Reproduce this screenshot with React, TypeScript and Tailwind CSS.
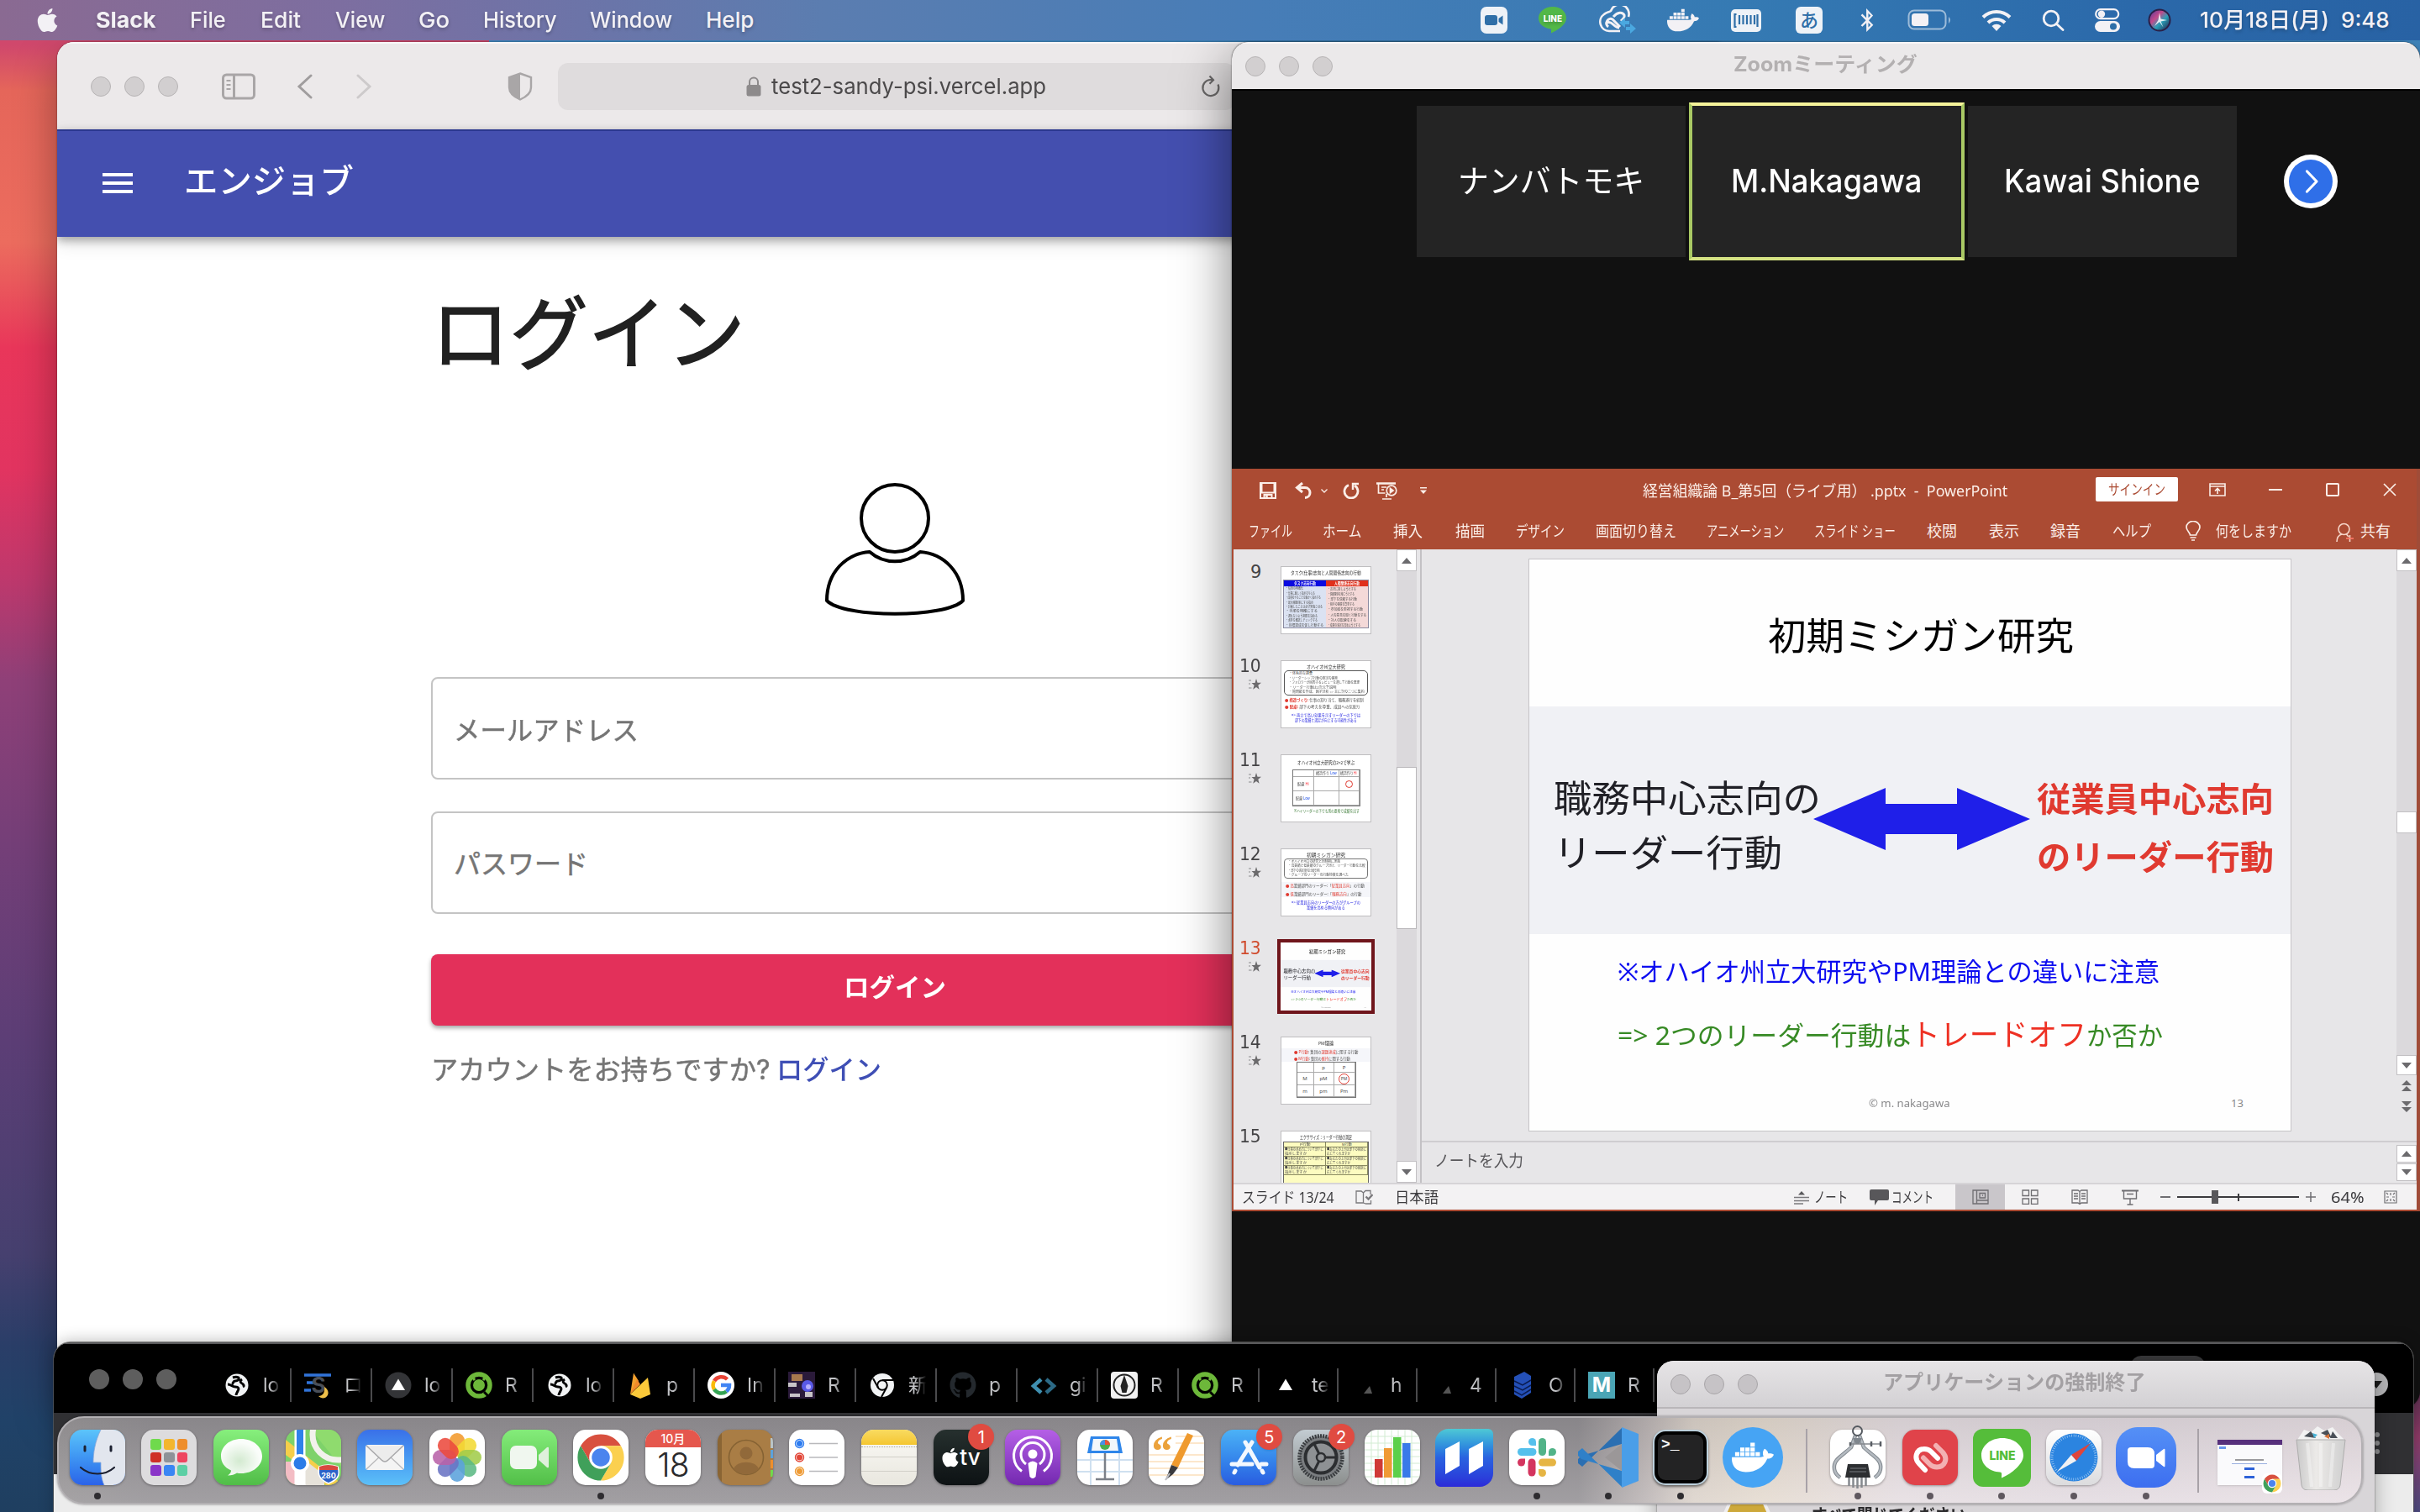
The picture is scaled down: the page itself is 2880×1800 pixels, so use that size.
import React, { useLayoutEffect, useRef, useState } from "react";
import { FaApple, FaBluetoothB, FaDocker, FaGithub } from "react-icons/fa";

/* Text squeezed or stretched horizontally so that it fills its box exactly. */
function Fit({ className = "", children }: { className?: string; children: React.ReactNode }) {
  const box = useRef<HTMLSpanElement>(null);
  const inner = useRef<HTMLSpanElement>(null);
  const [k, setK] = useState(1);
  useLayoutEffect(() => {
    if (box.current && inner.current && inner.current.offsetWidth) {
      setK(box.current.offsetWidth / inner.current.offsetWidth);
    }
  }, []);
  return (
    <span ref={box} className={"block shrink-0 leading-none " + className}>
      <span ref={inner} className="inline-block origin-left whitespace-pre" style={{ transform: `scaleX(${k})` }}>
        {children}
      </span>
    </span>
  );
}

function Lights({ className, dot }: { className: string; dot: string }) {
  return (
    <div className={"flex shrink-0 gap-4 " + className}>
      {[0, 1, 2].map((i) => (
        <span key={i} className={"block h-6 w-6 rounded-full " + dot} />
      ))}
    </div>
  );
}

const greyDot = "bg-[#d2cfd0] border border-[#b7b4b5]";

/* ───────────── menu bar ───────────── */

function MenuBar() {
  return (
    <div className="absolute inset-x-0 top-0 flex h-12 items-center bg-[linear-gradient(90deg,#8a6a92_0%,#7d6ea0_14%,#6c74a8_24%,#5b7db0_34%,#477db7_52%,#357ab3_72%,#2b69aa_88%,#2862a4_100%)] text-[26px] font-medium text-[#f3f1f5] [text-shadow:0_2px_4px_rgba(0,0,0,0.25)]">
      <FaApple className="ml-[42px] h-[32px] w-[29px]" />
      <Fit className="ml-[43px] w-[72px] font-bold">Slack</Fit>
      <Fit className="ml-[40px] w-[43px]">File</Fit>
      <Fit className="ml-[41px] w-[48px]">Edit</Fit>
      <Fit className="ml-[41px] w-[59px]">View</Fit>
      <Fit className="ml-[40px] w-[37px]">Go</Fit>
      <Fit className="ml-[40px] w-[88px]">History</Fit>
      <Fit className="ml-[39px] w-[98px]">Window</Fit>
      <Fit className="ml-[40px] w-[57px]">Help</Fit>
      <div className="ml-auto flex h-full items-center">
        <svg className="h-8 w-8" viewBox="0 0 32 32">
          <rect width="32" height="32" rx="7" fill="#eef2f7" />
          <rect x="5" y="10" width="15" height="12" rx="3" fill="#2f6fa8" />
          <path d="M21.5 14l5-3.5v11l-5-3.500z" fill="#2f6fa8" />
        </svg>
        <svg className="ml-[36px] h-[34px] w-[36px]" viewBox="0 0 36 34">
          <path d="M18 1C8.500 1 1 7 1 14.500c0 7 6 12 15 13v5c6-3 18-9 18-18C34 7 27.500 1 18 1z" fill="#52b848" />
          <text x="18" y="18.500" fontSize="10" fontWeight="800" fontFamily="Inter" fill="#fff" textAnchor="middle">LINE</text>
        </svg>
        <svg className="ml-[36px] h-[34px] w-[46px]" viewBox="0 0 46 34" fill="none">
          <path d="M26 30H13a11 11 0 0 1-6-20C10 7 12 8 15 6a11 11 0 0 1 21 7" stroke="#f3f1f5" strokeWidth="2.600" />
          <path d="M25 26c-6 0-9-9-14-6M18 13c5-6 11-6 13-2 1 3-2 5-4 7M12 25c-5-4 0-12 5-9l9 9" stroke="#f3f1f5" strokeWidth="3" />
          <path d="M25 20l7-6v4h5v4h-5v4zM45 27l-7 6v-4h-5v-4h5v-4z" fill="#4aa8e0" />
        </svg>
        <FaDocker className="ml-[36px] h-[34px] w-[38px]" />
        <svg className="ml-[38px] h-[27px] w-[36px]" viewBox="0 0 36 27">
          <rect width="36" height="27" rx="5" fill="#eef2f7" />
          <path d="M6.500 6h-2v15h2M10 7v11M14.500 7v11M19 7v11M23.500 7v11M28 7v11M31.500 6v15" stroke="#2f6fa8" strokeWidth="2.200" fill="none" />
        </svg>
        <span className="ml-[41px] flex h-8 w-8 items-center justify-center rounded-[6px] bg-[#eef2f7] text-[22px] leading-none text-[#2f6fa8] [text-shadow:none]">あ</span>
        <FaBluetoothB className="ml-[42px] h-[28px] w-[22px]" />
        <svg className="ml-[37px] h-[26px] w-[54px]" viewBox="0 0 54 26">
          <rect x="1.500" y="1.500" width="44" height="22" rx="6.500" fill="none" stroke="#9dbcd9" strokeWidth="2" />
          <rect x="5" y="5" width="20" height="15" rx="3.500" fill="#f3f1f5" />
          <path d="M49 9q4 3.500 0 8z" fill="#9dbcd9" />
        </svg>
        <svg className="ml-[34px] h-[26px] w-[36px]" viewBox="0 0 36 26" fill="none" stroke="#f3f1f5" strokeWidth="4">
          <path d="M2 9.500a23 23 0 0 1 32 0M8 16a14.500 14.500 0 0 1 20 0" />
          <path d="M18 26l-5.500-6a8 8 0 0 1 11 0z" fill="#f3f1f5" stroke="none" />
        </svg>
        <svg className="ml-[36px] h-[26px] w-[27px]" viewBox="0 0 27 26" fill="none" stroke="#f3f1f5" strokeWidth="2.800">
          <circle cx="11" cy="11" r="8.800" />
          <path d="M17.500 17.500l7.500 7" strokeLinecap="round" />
        </svg>
        <svg className="ml-[36px] h-[28px] w-[30px]" viewBox="0 0 30 28">
          <rect x="1.200" y="1.200" width="27" height="11" rx="5.500" fill="none" stroke="#f3f1f5" strokeWidth="2.200" />
          <circle cx="8" cy="6.700" r="4.200" fill="#f3f1f5" />
          <rect y="15" width="30" height="13" rx="6.500" fill="#f3f1f5" />
          <circle cx="22" cy="21.500" r="4" fill="#2f6fa8" />
        </svg>
        <svg className="ml-[33px] h-[28px] w-[28px]" viewBox="0 0 28 28">
          <defs>
            <linearGradient id="siri" x1="0" y1="0" x2="1" y2="1">
              <stop offset="0" stopColor="#5a3a9a" />
              <stop offset=".35" stopColor="#c24a8a" />
              <stop offset=".6" stopColor="#2aa0b8" />
              <stop offset="1" stopColor="#20204a" />
            </linearGradient>
          </defs>
          <circle cx="14" cy="14" r="13.500" fill="#2a2048" />
          <circle cx="14" cy="14" r="11.500" fill="url(#siri)" />
          <path d="M14 5l1.500 7.500L23 14l-7.500 1.500 3 7L14 16l-6 5 4.500-7z" fill="#fff" opacity=".85" />
        </svg>
        <Fit className="ml-[34px] w-[154px]">10月18日(月)</Fit>
        <Fit className="ml-[14px] mr-[36px] w-[58px]">9:48</Fit>
      </div>
    </div>
  );
}

/* ───────────── Safari with the login page ───────────── */

function SafariWindow() {
  return (
    <div className="absolute left-[68px] top-[50px] flex h-[1620px] w-[1994px] flex-col overflow-hidden rounded-t-[20px] bg-white shadow-[0_0_2px_rgba(0,0,0,0.5),0_20px_50px_rgba(0,0,0,0.35)]">
      <div className="flex h-[104px] shrink-0 items-center border-t-2 border-[#f8f6f7] bg-[#ece9ea]">
        <Lights className="ml-[40px]" dot={greyDot} />
        <svg className="ml-[52px] h-[32px] w-[40px]" viewBox="0 0 40 32" fill="none" stroke="#a9a6a7" strokeWidth="3">
          <rect x="1.500" y="2" width="37" height="28" rx="4" />
          <path d="M14.500 2v28" />
          <path d="M5.500 9h5M5.500 14h5M5.500 19h5" strokeWidth="2" />
        </svg>
        <svg className="ml-[49px] h-[30px] w-[20px]" viewBox="0 0 20 30" fill="none" stroke="#a09d9e" strokeWidth="3" strokeLinecap="round">
          <path d="M17 2L3 15l14 13" />
        </svg>
        <svg className="ml-[50px] h-[30px] w-[20px]" viewBox="0 0 20 30" fill="none" stroke="#cdcacb" strokeWidth="3" strokeLinecap="round">
          <path d="M3 2l14 13L3 28" />
        </svg>
        <svg className="ml-[161px] h-[34px] w-[30px]" viewBox="0 0 30 34">
          <path d="M15 1.500L28 6v12c0 7-5 11-13 14.500C7 29 2 25 2 18V6z" fill="none" stroke="#a9a6a7" strokeWidth="2.400" />
          <path d="M15 1.500V32.500C7 29 2 25 2 18V6z" fill="#a9a6a7" />
        </svg>
        <div className="ml-[30px] flex h-[56px] w-[806px] items-center rounded-[12px] bg-[#dfdcdd] text-[26px] text-[#4b494a]">
          <svg className="ml-[224px] h-[24px] w-[18px]" viewBox="0 0 18 24">
            <rect x="0.500" y="10" width="17" height="13.500" rx="2.500" fill="#8d8a8b" />
            <path d="M4 11V6.500a5 5 0 0 1 10 0V11" fill="none" stroke="#8d8a8b" strokeWidth="2" />
          </svg>
          <Fit className="ml-[12px] w-[327px]">test2-sandy-psi.vercel.app</Fit>
          <svg className="ml-[184px] h-[28px] w-[24px]" viewBox="0 0 24 28" fill="none" stroke="#6a6868" strokeWidth="2.200">
            <path d="M20.500 11.500a9.500 9.500 0 1 1-9-5.500h3" />
            <path d="M10.500 1.500l4.500 4.700-4.500 4.500" />
          </svg>
        </div>
      </div>
      <div className="relative flex h-[128px] shrink-0 items-center border-t-2 border-[#2b388f] bg-[#444faf] text-white shadow-[0_4px_10px_rgba(0,0,0,0.3),0_8px_20px_rgba(0,0,0,0.12)]">
        <div className="ml-[54px] mt-[-2px] flex w-9 flex-col gap-[6px]">
          <span className="h-1 bg-white" />
          <span className="h-1 bg-white" />
          <span className="h-1 bg-white" />
        </div>
        <Fit className="ml-[61px] mt-[-6px] w-[202px] text-[40px] font-medium">エンジョブ</Fit>
      </div>
      <div className="ml-[445px] flex w-[1104px] flex-col">
        <Fit className="mt-[67px] w-[374px] text-[96px] font-normal text-[#212121] [-webkit-text-stroke:1.5px_#212121]">ログイン</Fit>
        <svg className="ml-[468px] mt-[128px] h-[160px] w-[168px]" viewBox="0 0 168 160" fill="none" stroke="#000" strokeWidth="4" strokeLinejoin="round">
          <circle cx="84" cy="44" r="40" />
          <path d="M54 84C26 86 3 108 3 142c20 21 142 21 162 0 0-34-23-56-51-58-17 15-43 15-60 0z" />
        </svg>
        <div className="mt-[73px] flex h-[122px] items-center rounded-[8px] border-2 border-[#c4c4c4] pl-[25px] pt-[6px] [-webkit-text-stroke:0.500px_#757575]">
          <Fit className="w-[220px] text-[32px] text-[#757575]">メールアドレス</Fit>
        </div>
        <div className="mt-[38px] flex h-[122px] items-center rounded-[8px] border-2 border-[#c4c4c4] pl-[25px] pt-[4px] [-webkit-text-stroke:0.500px_#757575]">
          <Fit className="w-[160px] text-[32px] text-[#757575]">パスワード</Fit>
        </div>
        <div className="mt-[48px] flex h-[85px] items-center justify-center rounded-[8px] bg-[#e3305a] pb-[7px] shadow-[0_3px_5px_rgba(0,0,0,0.35)]">
          <Fit className="w-[122px] text-[30px] font-bold text-white">ログイン</Fit>
        </div>
        <div className="mt-[37px] flex items-center text-[32px]">
          <Fit className="w-[403px] text-[#757575] [-webkit-text-stroke:0.500px_#757575]">アカウントをお持ちですか?</Fit>
          <Fit className="ml-[8px] w-[125px] font-medium text-[#3f4fb5]">ログイン</Fit>
        </div>
      </div>
    </div>
  );
}

/* ───────────── PowerPoint share ───────────── */

function Slide() {
  return (
    <div className="flex h-[680px] w-[906px] shrink-0 flex-col bg-[#fefefe] font-['Noto_Sans','Noto_Sans_CJK_JP',sans-serif]">
      <div className="flex h-[175px] items-center justify-center pl-[25px] pt-[6px]">
        <Fit className="w-[364px] text-[45px] text-black">初期ミシガン研究</Fit>
      </div>
      <div className="flex h-[271px] bg-[#f0f1f5]">
        <div className="ml-[29px] mt-[87px] w-[315px] text-[44px] text-[#202026]">
          <Fit className="w-[318px]">職務中心志向の</Fit>
          <Fit className="mt-[21px] w-[272px]">リーダー行動</Fit>
        </div>
        <svg className="ml-[-6px] mt-[97px] h-[74px] w-[258px]" viewBox="0 0 258 74">
          <path d="M0 37L86 0v19h85V0l87 37-87 37V55H86v19z" fill="#1f1fe9" />
        </svg>
        <div className="ml-[8px] mt-[90px] text-[40px] font-bold text-[#e03a30]">
          <Fit className="w-[282px]">従業員中心志向</Fit>
          <Fit className="mt-[29px] w-[282px]">のリーダー行動</Fit>
        </div>
      </div>
      <div className="flex flex-1 flex-col pl-[105px] text-[31px]">
        <Fit className="mt-[29px] w-[645px] text-[#0d0df0]">※オハイオ州立大研究やPM理論との違いに注意</Fit>
        <div className="mt-[42px] flex items-end text-[#378a25]">
          <Fit className="mb-[2px] w-[349px]">=&gt; 2つのリーダー行動は</Fit>
          <Fit className="w-[209px] text-[36px] text-[#ee3023]">トレードオフ</Fit>
          <Fit className="mb-[2px] w-[91px]">か否か</Fit>
        </div>
        <div className="mt-[57px] flex text-[13px] text-[#8a8a8c]">
          <Fit className="ml-[299px] w-[97px]">© m. nakagawa</Fit>
          <Fit className="ml-[334px] w-[15px]">13</Fit>
        </div>
      </div>
    </div>
  );
}

function Star() {
  return (
    <svg className="h-[14px] w-[15px]" viewBox="0 0 15 14">
      <path d="M9 0l1.500 4.800H15l-3.700 3 1.300 5L9 10l-3.800 2.800 1.400-5L3.500 5h4z" fill="#6b6a6c" />
      <path d="M0 2h3M0 6h2M0 11h3.500" stroke="#8a898b" strokeWidth="1.200" />
    </svg>
  );
}

function ThumbRow({ n, active, star = true, children }: { n: number; active?: boolean; star?: boolean; children: React.ReactNode }) {
  return (
    <div className="flex h-[112px] shrink-0">
      <div className="flex w-[34px] flex-col items-end">
        <Fit className={(n > 9 ? "w-[26px]" : "w-[13px]") + " mr-px mt-[-3px] font-['DejaVu_Sans'] text-[21px] " + (active ? "text-[#d04a2c]" : "text-[#444345]")}>{n}</Fit>
        {star && <div className="mr-px mt-[4px]"><Star /></div>}
      </div>
      {active ? (
        <div className="ml-[18px] mt-[-4px] h-[89px] w-[116px] overflow-hidden border-4 border-[#6f151b] bg-white">
          <div className="h-[81px] w-[108px] origin-top-left scale-[0.1192]">{children}</div>
        </div>
      ) : (
        <div className="ml-[22px] flex h-[81px] w-[108px] flex-col overflow-hidden border border-[#bfbec0] bg-white text-[#4a4a4a]">{children}</div>
      )}
    </div>
  );
}

function ThumbTitle({ children, className = "w-[46px]" }: { children: React.ReactNode; className?: string }) {
  return (
    <div className="flex justify-center pb-[1px] pt-[4px] text-[6px] text-[#333]">
      <Fit className={className}>{children}</Fit>
    </div>
  );
}

function ThumbPanel() {
  return (
    <div className="flex w-[194px] flex-col overflow-hidden pt-[20px]">
      <ThumbRow n={9} star={false}>
        <ThumbTitle className="w-[84px]">タスク(仕事)志向と人間関係志向の行動</ThumbTitle>
        <div className="mx-[2px] mt-[4px] flex h-[58px] border border-[#8a8aa0] text-[4px]">
          <div className="flex w-[50px] flex-col gap-[1.400px] bg-[#dbe2f2]">
            <div className="flex h-[7px] items-center justify-center bg-[#0a0ae0] text-[5px] font-bold text-white"><Fit className="w-[26px]">タスク志向行動</Fit></div>
            <Fit className="ml-[2px] w-[21px]">・役割の明確化</Fit>
            <Fit className="ml-[2px] w-[35px]">・仕事に厳しく指示を与える</Fit>
            <Fit className="ml-[2px] w-[42px]">・成員のやることを細かく指示する</Fit>
            <Fit className="ml-[2px] w-[33px]">・最大稼動率にする指示</Fit>
            <Fit className="ml-[2px] w-[44px]">・計画したことは必ず実施させる</Fit>
            <Fit className="ml-[2px] w-[38px]">・手順を明確にする</Fit>
            <Fit className="ml-[2px] w-[38px]">・遅れないよう期限を決める</Fit>
            <Fit className="ml-[2px] w-[38px]">・進捗を確認しチェックする</Fit>
            <Fit className="ml-[2px] w-[45px]">・目標達成を促し行動する</Fit>
          </div>
          <div className="flex flex-1 flex-col gap-[2.100px] bg-[#f4d9d8]">
            <div className="flex h-[7px] items-center justify-center bg-[#e0301c] text-[5px] font-bold text-white"><Fit className="w-[30px]">人間関係志向行動</Fit></div>
            <Fit className="ml-[2px] w-[34px]">・友好に接しようとする</Fit>
            <Fit className="ml-[2px] w-[32px]">・信頼関係を築こうとする</Fit>
            <Fit className="ml-[2px] w-[35px]">・部下を信頼する行動</Fit>
            <Fit className="ml-[2px] w-[32px]">・相手の感情を尊重する</Fit>
            <Fit className="ml-[2px] w-[42px]">・参加者を重視する行動</Fit>
            <Fit className="ml-[2px] w-[46px]">・人の意見を聞く行動をする</Fit>
            <Fit className="ml-[2px] w-[34px]">・対人の配慮をする</Fit>
            <Fit className="ml-[2px] w-[39px]">・成員の満足を高めようとする</Fit>
          </div>
        </div>
      </ThumbRow>
      <ThumbRow n={10}>
        <ThumbTitle>オハイオ州立大研究</ThumbTitle>
        <div className="mx-[3px] flex h-[30px] flex-col justify-center gap-[1.500px] rounded-[5px] border border-[#555] pl-[5px] text-[4px]">
          <Fit className="w-[28px]">・体系的な調査</Fit>
          <Fit className="w-[58px]">・リーダーシップ行動の測定の開発</Fit>
          <Fit className="w-[84px]">・フォロワーが回答するレビューを通して行動を整理</Fit>
          <Fit className="w-[56px]">・リーダー行動は2次元で説明</Fit>
          <Fit className="w-[90px]">・質問紙を作成、因子分析 =&gt; 主に次の二つに集約</Fit>
        </div>
        <div className="mt-[3px] flex flex-col gap-[3.500px] pl-[4px] text-[4.500px]">
          <Fit className="w-[94px]"><b className="text-[#e03a30]">● 構造づくり:</b> 仕事の割り当て、職務遂行を統制</Fit>
          <Fit className="w-[90px]"><b className="text-[#e03a30]">● 配慮:</b> 部下の考えを尊重、成員への気配り</Fit>
        </div>
        <div className="mt-[5px] flex flex-col items-center gap-[2px] text-[4.500px] text-[#2020e0]">
          <Fit className="w-[82px]">=&gt; 両立で高い効果を示すリーダーの下では</Fit>
          <Fit className="w-[74px]">部下の業績と満足が向上する可能性がある</Fit>
        </div>
      </ThumbRow>
      <ThumbRow n={11}>
        <ThumbTitle className="mt-[2px] w-[68px]">オハイオ州立大研究の2×2で学ぶ</ThumbTitle>
        <div className="mx-auto mt-[4px] grid h-[44px] w-[81px] shrink-0 grid-cols-[25px_30px_24px] grid-rows-[8px_17px_17px] border border-[#777] text-[4.500px] [&>div]:flex [&>div]:items-center [&>div]:justify-center [&>div]:border-b [&>div]:border-r [&>div]:border-[#aaa]">
          <div /><div><Fit className="w-[25px]">構造作り <span className="text-blue-700">Low</span></Fit></div><div><Fit className="w-[20px]">構造作り<span className="text-red-500">Hi</span></Fit></div>
          <div><Fit className="w-[14px]">配慮 <span className="text-red-500">Hi</span></Fit></div><div /><div><span className="h-[9px] w-[9px] rounded-full border border-[#e03a30]" /></div>
          <div><Fit className="w-[17px]">配慮 <span className="text-blue-700">Low</span></Fit></div><div /><div />
        </div>
        <Fit className="ml-[15px] mt-[3px] w-[78px] text-[4.500px] text-[#3a7a35]">※ハイリーダーの下でも別の要素で成績を出す</Fit>
      </ThumbRow>
      <ThumbRow n={12}>
        <ThumbTitle>初期ミシガン研究</ThumbTitle>
        <div className="mx-[3px] flex h-[24px] flex-col justify-center gap-[1.500px] rounded-[4px] border border-[#777] pl-[4px] text-[4px]">
          <Fit className="w-[62px]">・オハイオ州立の研究と同時期に実施</Fit>
          <Fit className="w-[92px]">・高業績と低業績のグループ分け、リーダー行動を比較</Fit>
          <Fit className="w-[38px]">・部下の満足度の比較分析</Fit>
          <Fit className="w-[72px]">・グループのリーダーの行動特徴を調べた</Fit>
        </div>
        <div className="mt-[4px] flex flex-col gap-[5px] bg-[#f5f6fa] py-[2px] pl-[5px] text-[4.500px]">
          <Fit className="w-[94px]"><span className="text-[#e03a30]">● 高</span>業績部門のリーダー:「<span className="text-[#e03a30]">従業員志向</span>」の行動</Fit>
          <Fit className="w-[90px]"><span className="text-[#e03a30]">● 低</span>業績部門のリーダー:「<span className="text-[#e03a30]">職務志向</span>」の行動</Fit>
        </div>
        <div className="mt-[4px] flex flex-col items-center gap-[1.500px] text-[4.500px] text-[#2020e0]">
          <Fit className="w-[82px]">=&gt; 従業員志向のリーダーの方がグループの</Fit>
          <Fit className="w-[46px]">業績を高める傾向がある</Fit>
        </div>
      </ThumbRow>
      <ThumbRow n={13} active><Slide /></ThumbRow>
      <ThumbRow n={14}>
        <ThumbTitle className="w-[18px]">PM理論</ThumbTitle>
        <div className="mt-[2px] flex flex-col gap-[3px] bg-[#f5f6fa] py-[2px] pl-[15px] text-[4.500px]">
          <Fit className="w-[76px]"><span className="text-[#e03a30]">● P行動</span>: 集団の<span className="text-[#e03a30]">課題達成</span>に関する行動</Fit>
          <Fit className="w-[67px]"><span className="text-[#e03a30]">● M行動</span>: 集団の<span className="text-[#e03a30]">維持</span>に関する行動</Fit>
        </div>
        <div className="mx-auto grid h-[43px] w-[71px] shrink-0 grid-cols-[20px_24px_25px] grid-rows-[12px_15px_14px] border border-[#777] text-[6px] leading-none [&>div]:flex [&>div]:items-center [&>div]:justify-center [&>div]:border-b [&>div]:border-r [&>div]:border-[#aaa]">
          <div /><div>p</div><div>P</div><div>M</div><div>pM</div>
          <div><span className="flex h-[13px] w-[13px] items-center justify-center rounded-full border border-[#e03a30] text-[5px]">PM</span></div>
          <div>m</div><div>pm</div><div>Pm</div>
        </div>
      </ThumbRow>
      <ThumbRow n={15} star={false}>
        <ThumbTitle className="w-[62px]">エクササイズ：リーダー行動の測定</ThumbTitle>
        <div className="mx-[2px] mt-[1px] grid h-[80px] shrink-0 grid-cols-2 grid-rows-[6px_11px_11px_11px_11px_11px] border border-[#666] bg-[#fdfcc0] text-[4px] [&>div]:flex [&>div]:flex-col [&>div]:items-start [&>div]:gap-px [&>div]:border-b [&>div]:border-r [&>div]:border-[#8a8a60] [&>div]:pl-px [&>div]:pt-px">
          <div><Fit className="ml-[18px] w-[12px]">P行動</Fit></div><div><Fit className="ml-[18px] w-[12px]">M行動</Fit></div>
          {[0, 1, 2].map((i) => (
            <React.Fragment key={i}>
              <div><Fit className="w-[46px]">■仕事の進め方について部下に</Fit><Fit className="w-[26px]">指示しますか</Fit></div>
              <div><Fit className="w-[47px]">■あなたの上司は部下の相談に</Fit><Fit className="w-[28px]">応じてくれますか</Fit></div>
            </React.Fragment>
          ))}
        </div>
      </ThumbRow>
    </div>
  );
}

function Arrow({ down, className = "h-[26px]" }: { down?: boolean; className?: string }) {
  return (
    <div className={"flex w-6 shrink-0 items-center justify-center border border-[#c2c0c3] bg-white " + className}>
      <svg className="h-[7px] w-[12px]" viewBox="0 0 12 7"><path d={down ? "M0 0h12L6 7z" : "M0 7h12L6 0z"} fill="#6c6b6e" /></svg>
    </div>
  );
}

function PowerPoint() {
  return (
    <div className="flex h-[884px] flex-col border-b-2 border-l-2 border-r-4 border-[#ab4b33] border-r-[#a04c38] bg-[#e7e6e8] font-['Noto_Sans','Noto_Sans_CJK_JP',sans-serif]">
      <div className="flex h-[52px] shrink-0 items-center bg-[#ab4b33] text-[18.500px] text-[#fbeee8]">
        <svg className="ml-[31px] h-[20px] w-[20px]" viewBox="0 0 20 20" fill="none" stroke="#fbeee8" strokeWidth="2">
          <path d="M1 1h18v18H1zM2.500 2v10.500h15V2" /><path d="M5.500 19v-4h9v4" /><path d="M8.500 15v4" strokeWidth="2.500" />
        </svg>
        <svg className="ml-[22px] h-[20px] w-[21px]" viewBox="0 0 21 20" fill="none" stroke="#fbeee8" strokeWidth="3">
          <path d="M9 1L2.500 6.500 9 12M3 6.500h9c8 0 8 12 0 12" />
        </svg>
        <svg className="ml-[10px] h-[5px] w-[8px]" viewBox="0 0 8 5" fill="none" stroke="#fbeee8" strokeWidth="1.300"><path d="M.5.500L4 4 7.500.500" /></svg>
        <svg className="ml-[18px] h-[20px] w-[20px]" viewBox="0 0 20 20" fill="none" stroke="#fbeee8" strokeWidth="2.800">
          <path d="M7 3.500a8 8 0 1 0 7 0.500" /><path d="M12 9V2h7" strokeWidth="2.400" />
        </svg>
        <svg className="ml-[20px] h-[21px] w-[25px]" viewBox="0 0 25 21" fill="none" stroke="#fbeee8" strokeWidth="1.700">
          <path d="M0 1.500h23" strokeWidth="2.500" /><path d="M2.500 2v11h8M6 6h6M6 9h3M12 14v4M7 20h11" /><circle cx="18" cy="10" r="5.800" /><path d="M16.500 7.500v5l3.500-2.500z" fill="#fbeee8" />
        </svg>
        <svg className="ml-[27px] h-[8px] w-[8px]" viewBox="0 0 8 8" fill="#fbeee8"><path d="M0 0h8v1.500H0zM0 3.500h8L4 8z" /></svg>
        <Fit className="ml-[257px] w-[434px]">経営組織論 B_第5回（ライブ用） .pptx  -  PowerPoint</Fit>
        <div className="ml-[105px] mt-[-3px] flex h-[29px] w-[98px] items-center justify-center rounded-[2px] bg-white text-[17px] text-[#ab4b33]">
          <Fit className="w-[68px]">サインイン</Fit>
        </div>
        <svg className="ml-[37px] mt-[-2px] h-[16px] w-[20px]" viewBox="0 0 20 16" fill="none" stroke="#fbeee8" strokeWidth="1.600"><path d="M1 1h18v14H1zM1 4h18M10 13V7M7 9.500L10 6.500l3 3" /></svg>
        <span className="ml-[51px] mt-[-2px] h-[2px] w-4 bg-[#fbeee8]" />
        <span className="ml-[52px] mt-[-2px] h-4 w-4 rounded-[2px] border-2 border-[#fbeee8]" />
        <svg className="ml-[52px] mt-[-2px] h-[16px] w-[16px]" viewBox="0 0 16 16" stroke="#fbeee8" strokeWidth="1.700"><path d="M1 1l14 14M15 1L1 15" /></svg>
      </div>
      <div className="flex h-[44px] shrink-0 items-center bg-[#ab4b33] text-[18px] text-[#fbeee8]">
        <Fit className="ml-[18px] w-[52px]">ファイル</Fit>
        <Fit className="ml-[36px] w-[46px]">ホーム</Fit>
        <Fit className="ml-[38px] w-[35px]">挿入</Fit>
        <Fit className="ml-[39px] w-[35px]">描画</Fit>
        <Fit className="ml-[37px] w-[58px]">デザイン</Fit>
        <Fit className="ml-[37px] w-[96px]">画面切り替え</Fit>
        <Fit className="ml-[36px] w-[92px]">アニメーション</Fit>
        <Fit className="ml-[36px] w-[97px]">スライド ショー</Fit>
        <Fit className="ml-[37px] w-[36px]">校閲</Fit>
        <Fit className="ml-[38px] w-[36px]">表示</Fit>
        <Fit className="ml-[37px] w-[36px]">録音</Fit>
        <Fit className="ml-[38px] w-[46px]">ヘルプ</Fit>
        <svg className="ml-[41px] h-[24px] w-[18px]" viewBox="0 0 18 24" fill="none" stroke="#fbeee8" strokeWidth="1.700">
          <path d="M5.500 17c0-3-4.500-5-4.500-9.500a8 7 0 0 1 16 0c0 4.500-4.500 6.500-4.500 9.500zM5.500 20h7M7 23h4" />
        </svg>
        <Fit className="ml-[18px] w-[90px]">何をしますか</Fit>
        <svg className="ml-[53px] mt-[4px] h-[24px] w-[21px]" viewBox="0 0 21 24" fill="none" stroke="#f6d5c8" strokeWidth="1.600">
          <circle cx="9.500" cy="8" r="6.500" /><path d="M1 23c0-5 2.500-8 6-9M12 13.500l3 3.500M16.500 15v8" /><path d="M12 19h9" stroke="#ff7a6a" />
        </svg>
        <Fit className="ml-[8px] w-[36px]">共有</Fit>
      </div>
      <div className="flex h-[754px] shrink-0">
        <ThumbPanel />
        <div className="flex w-6 shrink-0 flex-col bg-[#dbd9dc]">
          <Arrow />
          <div className="mt-[233px] h-[193px] border border-[#b9b7ba] bg-white" />
          <div className="mt-auto"><Arrow down /></div>
        </div>
        <div className="ml-1 w-[2px] shrink-0 bg-[#c3c1c4]" />
        <div className="flex min-w-0 flex-1 flex-col">
          <div className="flex h-[704px] shrink-0">
            <div className="ml-[127px] mt-[11px] h-[682px] w-[908px] border border-[#c6c4c7]"><Slide /></div>
            <div className="ml-auto flex w-6 flex-col bg-[#dbd9dc]">
              <Arrow />
              <div className="mt-[286px] h-[26px] border border-[#c2c0c3] bg-white" />
              <div className="mt-auto"><Arrow down className="h-[24px]" /></div>
              <div className="flex h-[78px] flex-col items-center gap-[12px] bg-[#e7e6e8] pt-[6px]">
                <svg className="h-[13px] w-[12px]" viewBox="0 0 12 13" fill="#6c6b6e"><path d="M0 6h12L6 0zM0 13h12L6 7z" /></svg>
                <svg className="h-[13px] w-[12px]" viewBox="0 0 12 13" fill="#6c6b6e"><path d="M0 0h12L6 6zM0 7h12l-6 6z" /></svg>
              </div>
            </div>
          </div>
          <div className="flex flex-1 items-center border-t-2 border-[#cfcdd0] text-[19px] text-[#58575a]">
            <Fit className="ml-[15px] mt-[-4px] w-[106px]">ノートを入力</Fit>
            <div className="ml-auto flex flex-col gap-px"><Arrow className="h-[21px]" /><Arrow down className="h-[21px]" /></div>
          </div>
        </div>
      </div>
      <div className="flex flex-1 items-center border-t-2 border-[#d6d4d7] bg-[#f3f2f3] text-[18px] text-[#3c3b3e]">
        <Fit className="ml-[10px] w-[110px]">スライド 13/24</Fit>
        <svg className="ml-[25px] h-[18px] w-[21px]" viewBox="0 0 21 18" fill="none" stroke="#7a797c" strokeWidth="1.300"><path d="M9.500 16H1V2h6l2.500 2zM9.500 16V4L12 1.500h6V6M9.500 16l3 1h6v-4" /><path d="M12.500 8.500l3 3L20.500 6" strokeWidth="2.400" /></svg>
        <Fit className="ml-[26px] w-[52px]">日本語</Fit>
        <svg className="ml-[423px] h-[17px] w-[18px]" viewBox="0 0 18 17" fill="none" stroke="#7a797c" strokeWidth="1.500"><path d="M0 8.500h18M0 12.500h18M0 16h11" /><path d="M5 5.500h8L9 1z" fill="#5a595c" stroke="none" /></svg>
        <Fit className="ml-[6px] w-[40px]">ノート</Fit>
        <svg className="ml-[26px] h-[19px] w-[23px]" viewBox="0 0 23 19" fill="#58575a"><path d="M2 0h19q2 0 2 2v9q0 2-2 2h-11l-4 6v-6H2q-2 0-2-2V2q0-2 2-2z" /></svg>
        <Fit className="ml-[3px] w-[50px]">コメント</Fit>
        <div className="ml-[26px] flex h-full w-[59px] items-center justify-center bg-[#c9c6ca]">
          <svg className="h-[18px] w-[20px]" viewBox="0 0 20 18" fill="none" stroke="#6f6e72" strokeWidth="1.300"><path d="M1 1h18v16H1zM5.500 1v16M9 4.500h6.500V10H9zM5.500 13H19M12 7h1" /></svg>
        </div>
        <svg className="ml-[20px] h-[18px] w-[20px]" viewBox="0 0 20 18" fill="none" stroke="#6f6e72" strokeWidth="1.300"><path d="M1 1h7.500v6.500H1zM11.500 1H19v6.500h-7.500zM1 11h7.500v6.500H1zM11.500 11H19v6.500h-7.500z" /></svg>
        <svg className="ml-[39px] h-[18px] w-[20px]" viewBox="0 0 20 18" fill="none" stroke="#6f6e72" strokeWidth="1.300"><path d="M10 2.500L8 1H1v15h7l2 1.500L12 16h7V1h-7zM10 2.500v15M3 5h5M3 8h5M3 11h5M12 5h5M12 8h5M12 11h5" /></svg>
        <svg className="ml-[40px] h-[19px] w-[20px]" viewBox="0 0 20 19" fill="none" stroke="#6f6e72" strokeWidth="1.400"><path d="M0 1.500h20" strokeWidth="2" /><path d="M2.500 2v9h15V2M6 5.500h8M10 11v7M6.500 18h7" /></svg>
        <span className="ml-[26px] h-[2px] w-[12px] bg-[#6f6e72]" />
        <div className="ml-[8px] flex h-4 w-[145px] items-center">
          <span className="h-[2px] w-[41px] bg-[#3c3b3e]" />
          <span className="h-4 w-2 bg-[#58575a]" />
          <span className="h-[2px] w-[23px] bg-[#3c3b3e]" />
          <span className="h-[9px] w-[2px] bg-[#3c3b3e]" />
          <span className="h-[2px] flex-1 bg-[#3c3b3e]" />
        </div>
        <svg className="ml-[8px] h-[12px] w-[12px]" viewBox="0 0 12 12" stroke="#6f6e72" strokeWidth="1.500"><path d="M0 6h12M6 0v12" /></svg>
        <Fit className="ml-[18px] w-[40px]">64%</Fit>
        <svg className="ml-[23px] h-[16px] w-[16px]" viewBox="0 0 16 16" fill="none" stroke="#6f6e72" strokeWidth="1.200"><path d="M1 1h14v14H1zM8 3v3M8 10v3M3 8h3M10 8h3M3 3l2 2M13 3l-2 2M3 13l2-2M13 13l-2-2" /></svg>
      </div>
    </div>
  );
}

function ZoomWindow() {
  return (
    <div className="absolute left-[1466px] top-[50px] h-[1626px] w-[1414px] overflow-hidden rounded-[20px] bg-[#111] shadow-[0_0_2px_rgba(0,0,0,0.6),0_20px_64px_rgba(0,0,0,0.5)]">
      <div className="flex h-14 items-center border-t-2 border-[#f8f6f7] bg-[#ebe9ea] text-[24px] font-bold text-[#b3b0b1]">
        <Lights className="ml-4" dot={greyDot} />
        <Fit className="ml-[477px] mt-[-4px] w-[219px]">Zoomミーティング</Fit>
      </div>
      <div className="flex h-[452px] border-t-2 border-black pl-[220px] pt-[14px] text-[38px] text-white">
        <div className="mt-1 flex h-[180px] w-[320px] items-center justify-center bg-[#242424]">
          <Fit className="mt-[-2px] w-[222px]">ナンバトモキ</Fit>
        </div>
        <div className="ml-1 flex h-[188px] w-[328px] items-center justify-center border-4 border-[#d5e283] border-x-[#a9c964] border-t-[#f6f39a] bg-[#242424]">
          <Fit className="mt-[-2px] w-[228px] font-medium">M.Nakagawa</Fit>
        </div>
        <div className="ml-1 mt-1 flex h-[180px] w-[320px] items-center justify-center bg-[#242424]">
          <Fit className="mt-[-2px] w-[234px] font-medium">Kawai Shione</Fit>
        </div>
        <svg className="ml-[56px] mt-[62px] h-16 w-16" viewBox="0 0 64 64">
          <circle cx="32" cy="32" r="32" fill="#fff" />
          <circle cx="32" cy="32" r="26" fill="#2f6fe8" />
          <path d="M27.500 20L39 32 27.500 44" fill="none" stroke="#fff" strokeWidth="3.200" strokeLinecap="round" strokeLinejoin="round" />
        </svg>
      </div>
      <PowerPoint />
    </div>
  );
}

/* ───────────── Chrome window ───────────── */

const Globe = () => (
  <svg className="h-7 w-7" viewBox="0 0 28 28"><circle cx="14" cy="14" r="13.500" fill="#f1f3f4" /><path d="M9 5c3-1 5-1 7 0 1 2-1 4-4 4s-2 3-4 4M20 7c-3 2-2 4 0 5s3 3 1 4M3 13c4 0 5 3 9 3s5 2 3 5c-1 2-2 3-2 5" fill="none" stroke="#000" strokeWidth="3" /></svg>
);
const Qiita = () => (
  <svg className="h-8 w-8" viewBox="0 0 32 32"><circle cx="16" cy="16" r="13" fill="none" stroke="#6db83a" strokeWidth="5.500" /><circle cx="16" cy="16" r="7" fill="#6db83a" /><path d="M8 6l3 4M24 6l-3 4" stroke="#6db83a" strokeWidth="3" /><path d="M22 24l7 7" stroke="#000" strokeWidth="3" /></svg>
);
const tabs: { icon: React.ReactNode; label: string; narrow?: boolean }[] = [
  { icon: <Globe />, label: "lo" },
  { icon: <svg className="h-8 w-8" viewBox="0 0 32 32"><path d="M0 4h32M3 13h8M0 22h8" stroke="#3173d8" strokeWidth="3.500" /><text x="17" y="25" fontSize="26" fontWeight="700" fontFamily="Inter" fill="#4a4f58" textAnchor="middle">S</text><path d="M24 18c6 4 6 10 1 13-3 1-6 0-8-2 5 0 8-4 7-11z" fill="#efc04a" /></svg>, label: "ロ" },
  { icon: <svg className="h-8 w-8" viewBox="0 0 32 32"><circle cx="16" cy="16" r="15.500" fill="#333437" /><path d="M16 8.500l8 13.500H8z" fill="#fff" /></svg>, label: "lo" },
  { icon: <Qiita />, label: "R" },
  { icon: <Globe />, label: "lo" },
  { icon: <svg className="h-8 w-8" viewBox="0 0 32 32"><path d="M4 27L8 1.500 14 11z" fill="#f2a02e" /><path d="M4 27L12 9l4 6z" fill="#f28a2a" /><path d="M4 27L25 7l3 20-12 5z" fill="#fbc93a" /></svg>, label: "p" },
  { icon: <svg className="h-8 w-8" viewBox="0 0 32 32"><circle cx="16" cy="16" r="16" fill="#fff" /><g fill="none" strokeWidth="4.500"><path d="M8 11a10 10 0 0 1 15.500-2" stroke="#e94335" /><path d="M8 21a10 10 0 0 1 0-10" stroke="#fabb05" /><path d="M22.500 23.500A10 10 0 0 1 8 21" stroke="#34a353" /><path d="M16 16h10c0 4-1.500 6-3.500 7.500" stroke="#4285f3" /></g></svg>, label: "In" },
  { icon: <svg className="h-8 w-8" viewBox="0 0 32 32"><path fill="#2a1a3a" d="M0 0h32v32H0z" /><path fill="#a8794e" d="M4 3h13v8H4z" /><path fill="#c8c4c8" d="M0 13h10v5H0zM2 26h12v4H2zM20 24h9v6h-9z" /><circle cx="23" cy="17" r="7" fill="#5a5ae8" /><circle cx="24" cy="18" r="3" fill="#b8b0ff" /></svg>, label: "R" },
  { icon: <svg className="h-7 w-7" viewBox="0 0 28 28"><circle cx="14" cy="14" r="14" fill="#f1f3f4" /><circle cx="14" cy="14" r="5.800" fill="none" stroke="#000" strokeWidth="2" /><path d="M14 8h13M9 17L3 6M19 17l-6 11" stroke="#000" strokeWidth="2" /></svg>, label: "新" },
  { icon: <FaGithub className="h-8 w-8 text-[#24292e]" />, label: "p" },
  { icon: <svg className="h-8 w-8" viewBox="0 0 32 32" fill="none" stroke="#3f8fb0" strokeWidth="4.500"><path d="M13 9l-9 8 9 8" /><path d="M19 9l9 8-9 8" stroke="#2c6a86" /></svg>, label: "gi" },
  { icon: <svg className="h-8 w-8" viewBox="0 0 32 32"><rect width="32" height="32" rx="4" fill="#f2f2f2" /><circle cx="16" cy="16" r="12.500" fill="none" stroke="#222" strokeWidth="2" /><path d="M16 4l4.500 13-2 8h-5l-2-8z" fill="#222" /></svg>, label: "R" },
  { icon: <Qiita />, label: "R" },
  { icon: <svg className="h-8 w-8" viewBox="0 0 32 32"><path d="M16 8.500l8 13.500H8z" fill="#fff" /></svg>, label: "te", narrow: true },
  { icon: <svg className="h-8 w-8" viewBox="0 0 32 32"><path d="M22 17l3 9H15z" fill="#555" /></svg>, label: "h", narrow: true },
  { icon: <svg className="h-8 w-8" viewBox="0 0 32 32"><path d="M22 17l3 9H15z" fill="#555" /></svg>, label: "4", narrow: true },
  { icon: <svg className="h-8 w-8" viewBox="0 0 32 32"><path d="M6 6l12-6 8 5v20l-11 7-9-5z" fill="#2450b8" /><path d="M6 11l10 5 10-6M6 17l10 5 10-6M6 23l9 5 11-7" stroke="#0a1c50" strokeWidth="1.500" fill="none" /></svg>, label: "O", narrow: true },
  { icon: <span className="flex h-8 w-8 items-center justify-center bg-[#4aa5b5] text-[24px] font-bold text-white">M</span>, label: "R", narrow: true },
];

function ChromeWindow() {
  return (
    <div className="absolute left-[64px] top-[1598px] flex h-[240px] w-[2808px] flex-col overflow-hidden rounded-t-[20px] bg-white shadow-[0_0_0_1px_rgba(90,90,90,0.7),0_-2px_18px_rgba(0,0,0,0.25)]">
      <div className="flex h-[84px] shrink-0 items-center border-t-2 border-[#5a5a5c] bg-black">
        <Lights className="ml-[42px] mt-[1px]" dot="bg-[#5e5e5e]" />
        <div className="ml-[41px] mt-[15px] flex">
          {tabs.map((t, i) => (
            <div key={i} className={"flex h-10 shrink-0 items-center border-r-2 border-[#4a4a4c] " + (t.narrow ? "w-[94px]" : "w-[96px]")}>
              <div className="ml-[15px] flex h-8 w-8 shrink-0 items-center justify-center">{t.icon}</div>
              <span className="ml-[15px] w-[21px] overflow-hidden whitespace-nowrap text-[23px] leading-[32px] text-[#c4c5c8] [mask-image:linear-gradient(90deg,#000_40%,transparent)]">{t.label}</span>
            </div>
          ))}
        </div>
        <svg className="ml-auto mr-[30px] mt-[14px] h-7 w-7" viewBox="0 0 28 28"><circle cx="14" cy="14" r="14" fill="#b4b4b6" /><path d="M7 10h14l-7 9z" fill="#1a1a1a" /></svg>
      </div>
      <div className="flex h-[73px] shrink-0 items-start justify-end bg-[#303033] pr-[40px] pt-[23px]">
        <div className="flex flex-col gap-1"><i className="h-[6px] w-[6px] rounded-full bg-[#8a8a8c]" /><i className="h-[6px] w-[6px] rounded-full bg-[#8a8a8c]" /><i className="h-[6px] w-[6px] rounded-full bg-[#8a8a8c]" /></div>
      </div>
      <div className="flex-1 bg-[#ececec]" />
    </div>
  );
}

function ForceQuitDialog() {
  return (
    <>
      <div className="absolute left-[2536px] top-[1614px] h-10 w-[88px] rounded-[12px] bg-[#39393b]" />
      <div className="absolute left-[1972px] top-[1620px] flex h-[240px] w-[854px] flex-col rounded-t-[20px] bg-[#d8d5d8] shadow-[0_0_2px_rgba(0,0,0,0.6),0_4px_24px_rgba(0,0,0,0.3)]">
        <div className="flex h-[57px] shrink-0 items-center rounded-t-[20px] border-b-2 border-[#b9b6b9] bg-gradient-to-b from-[#e6e4e6] to-[#d3d1d4] text-[24px] font-bold text-[#a3a0a3]">
          <Lights className="ml-4" dot="bg-[#c6c3c6] border border-[#a9a6a9]" />
          <Fit className="ml-[149px] mt-[-4px] w-[313px]">アプリケーションの強制終了</Fit>
        </div>
        <div className="flex items-start pt-[103px]">
          <svg className="ml-[48px] mt-[-14px] h-[110px] w-[118px]" viewBox="0 0 118 110"><path d="M48 2h22l46 102H2z" fill="#cda83a" stroke="#efeef0" strokeWidth="4" strokeLinejoin="round" /><rect x="54" y="6" width="9" height="16" rx="4" fill="#fff" /></svg>
          <Fit className="ml-[18px] mt-[14px] w-[184px] text-[23px] font-bold text-[#2a292b]">すべて閉じてください</Fit>
        </div>
      </div>
    </>
  );
}

/* ───────────── Dock ───────────── */

function Tile({ className, children }: { className: string; children?: React.ReactNode }) {
  return <div className={"h-[66px] w-[66px] overflow-hidden rounded-[15px] shadow-[0_1px_3px_rgba(0,0,0,0.35)] " + className}>{children}</div>;
}

const ChromeLogo = ({ className }: { className: string }) => (
  <svg className={className} viewBox="3 3 42 42">
    <path d="M6.680 14A20 20 0 0 1 41.320 14H24L15.340 29z" fill="#d8503f" />
    <path d="M41.320 14A20 20 0 0 1 24 44L32.660 29 24 14z" fill="#fbd04f" />
    <path d="M24 44A20 20 0 0 1 6.680 14L15.340 29 32.660 29z" fill="#40a05a" />
    <circle cx="24" cy="24" r="10" fill="#fff" /><circle cx="24" cy="24" r="7.800" fill="#4a84ee" />
  </svg>
);

const full = "h-full w-full";
type DockItem = { icon: React.ReactNode; on?: boolean; badge?: number };

const apps: DockItem[] = [
  { on: true, icon: <Tile className="bg-gradient-to-b from-[#5cc4fa] to-[#2c62e8]"><svg className={full} viewBox="0 0 66 66"><path d="M37 0C30 14 28 28 28 39h9c0 10 0 18 4 27h25V0z" fill="#e2e6ee" /><path d="M37 0C30 14 28 28 28 39h9c0 10 0 18 4 27" fill="none" stroke="#8aa8d8" strokeWidth=".8" /><path d="M18 20v5M49 20v5" stroke="#1c2030" strokeWidth="3" strokeLinecap="round" /><path d="M13 45c11 10 29 10 40 0" fill="none" stroke="#1c2030" strokeWidth="2.200" strokeLinecap="round" /></svg></Tile> },
  { icon: <Tile className="bg-[#dddcde] p-[11px]"><div className="grid h-full grid-cols-3 gap-[3px] [&>i]:rounded-[3px]"><i className="bg-[#6fda4c]" /><i className="bg-[#f3b62e]" /><i className="bg-[#ee8e2c]" /><i className="bg-[#cf2f26]" /><i className="bg-[#8e9298]" /><i className="bg-[#ee4560]" /><i className="bg-[#8a35c8]" /><i className="bg-[#3a86f4]" /><i className="bg-[#5ccfa4]" /></div></Tile> },
  { icon: <Tile className="bg-gradient-to-b from-[#87ef7d] to-[#50bd47]"><svg className={full} viewBox="0 0 66 66"><defs><radialGradient id="bub" cx=".45" cy=".6"><stop offset="0" stopColor="#d3ead0" /><stop offset="1" stopColor="#fafdfa" /></radialGradient></defs><path d="M33 11c14 0 25 9 25 20.500S47 52 33 52c-2 0-4 0-5-.5-3 2-6 3-11 3 3-2 4-4 4-6C13 45 9 39 9 31.500 9 20 19 11 33 11z" fill="url(#bub)" /></svg></Tile> },
  { icon: <Tile className="bg-[#7ed26a]"><svg className={full} viewBox="0 0 66 66"><path d="M30 0h36v44z" fill="#8fdb6e" /><circle cx="62" cy="6" r="30" fill="none" stroke="#f2f1ec" strokeWidth="7" /><path d="M0 12l66 52v2H48L0 30z" fill="#f5ce4a" /><path d="M0 38h26v28H0z" fill="#f3bcc4" /><path d="M20 34l26 20v12H20z" fill="#e6e2da" /><path d="M17 0v66" stroke="#fff" strokeWidth="13" /><path d="M17 0v36" stroke="#2f82ea" strokeWidth="8" /><circle cx="17" cy="40" r="11" fill="#fff" /><circle cx="17" cy="40" r="7.500" fill="#2b7ce8" /><path d="M40 44q10-4 22 0c4 12-2 16-11 20-9-4-14-9-11-20z" fill="#2c62c8" stroke="#fff" strokeWidth="1.500" /><path d="M40 48v-4q10-4 22 0v4z" fill="#d84840" /><text x="51" y="58" fontSize="9" fontWeight="700" fontFamily="Inter" fill="#fff" textAnchor="middle">280</text></svg></Tile> },
  { icon: <Tile className="bg-gradient-to-b from-[#3a70e8] to-[#5cc0f8]"><svg className={full} viewBox="0 0 66 66"><rect x="10" y="18" width="46" height="30" rx="3" fill="#f4f4f4" /><path d="M11 47l16-15M55 47L39 32" stroke="#b9b9bb" strokeWidth="1.300" /><path d="M11 19l18 17q4 4 8 0l18-17" fill="#ececec" stroke="#a8a8aa" strokeWidth="1.500" /></svg></Tile> },
  { icon: <Tile className="bg-white"><svg className={full} viewBox="0 0 66 66">{["#f39a2c", "#f2d934", "#a2cc4a", "#5cba84", "#5ba2dc", "#6a74c4", "#b862a8", "#ec4a3e"].map((c, i) => (<rect key={c} x="24" y="4" width="18" height="28" rx="9" fill={c} opacity=".88" transform={`rotate(${i * 45} 33 33)`} />))}</svg></Tile> },
  { icon: <Tile className="bg-gradient-to-b from-[#84ec7a] to-[#52bf48]"><svg className={full} viewBox="0 0 66 66" fill="#f0f7ef"><rect x="10" y="19" width="32" height="28" rx="7" /><path d="M44 30l10-9q2-1 2 1v22q0 2-2 1l-10-9z" fill="#dff0dc" /></svg></Tile> },
  { on: true, icon: <Tile className="flex items-center justify-center bg-white"><ChromeLogo className="h-[58px] w-[58px]" /></Tile> },
  { icon: <Tile className="flex flex-col items-center bg-white"><div className="flex h-[21px] w-full items-center justify-center bg-[#e5574d] text-[14px] font-medium leading-none text-white">10月</div><span className="mt-[1px] text-[39px] font-light leading-[40px] tracking-tight text-[#2a2a2c]">18</span></Tile> },
  { icon: <Tile className="bg-[#a97d45]"><svg className={full} viewBox="0 0 66 66"><path d="M0 0h5v66H0z" fill="#8a6534" /><path d="M63 10h3v12h-3z" fill="#b8c4c8" /><path d="M63 24h3v10h-3z" fill="#5ba2dc" /><path d="M63 36h3v10h-3z" fill="#ee8e2c" /><path d="M63 48h3v8h-3z" fill="#6fda4c" /><g fill="none" stroke="#856233" strokeWidth="1.600"><circle cx="34" cy="33" r="20.500" /></g><circle cx="34" cy="28" r="7.500" fill="#91693a" /><path d="M19 47c3-11 27-11 30 0-8 8-22 8-30 0z" fill="#91693a" /></svg></Tile> },
  { icon: <Tile className="bg-white"><svg className={full} viewBox="0 0 66 66">{["#2d7cf0", "#e24638", "#ee9a34"].map((c, i) => (<g key={c}><circle cx="12.500" cy={16.5 + i * 16.5} r="5" fill="none" stroke={c} strokeWidth="1.400" /><circle cx="12.500" cy={16.5 + i * 16.5} r="3.500" fill={c} /><path d={`M24 ${16.5 + i * 16.5}h34`} stroke="#b9b9bc" strokeWidth="1.400" /></g>))}</svg></Tile> },
  { icon: <Tile className="bg-gradient-to-b from-[#fbfaf6] to-[#e9e7df]"><div className="h-[18px] bg-gradient-to-b from-[#f9db60] to-[#f4c62e]" /><div className="mt-[2px] border-t border-dotted border-[#a8a69f]" /><div className="mt-[11px] border-t border-[#d2d0c9]" /><div className="mt-[16px] border-t border-[#d2d0c9]" /></Tile> },
  { badge: 1, icon: <Tile className="flex items-center justify-center bg-gradient-to-b from-[#26302e] to-[#0d1214] text-white"><FaApple className="h-[26px] w-[22px]" /><span className="text-[26px] font-medium leading-none">tv</span></Tile> },
  { icon: <Tile className="bg-gradient-to-b from-[#b55fe6] to-[#7428b0]"><svg className={full} viewBox="0 0 66 66" fill="none" stroke="#fff" strokeWidth="3"><path d="M20 49.500a22.500 22.500 0 1 1 26 0" /><path d="M25 41a14 14 0 1 1 16 0" /><circle cx="33" cy="29" r="5.500" fill="#fff" stroke="none" /><path d="M27.500 40q5.500-5 11 0l-2 16q-3.500 4-7 0z" fill="#fff" stroke="none" /></svg></Tile> },
  { icon: <Tile className="bg-white"><svg className={full} viewBox="0 0 66 66"><path d="M0 36h66M0 50h66M16 28v38M50 28v38" stroke="#cfe0f0" strokeWidth="2" /><path d="M16 8h34l4 20H12z" fill="#2f86ea" /><path d="M19 11h28l2 14H17z" fill="#f3f7fb" /><circle cx="33" cy="18" r="6" fill="#4cae50" /><path d="M33 18v-6a6 6 0 0 1 6 6z" fill="#e8553a" /><path d="M33 18v-6a6 6 0 0 0-6 6z" fill="#4a90e8" /><path d="M33 28v30" stroke="#7c8088" strokeWidth="2.500" /><path d="M22 59h22" stroke="#7c8088" strokeWidth="2.500" /></svg></Tile> },
  { icon: <Tile className="bg-white"><svg className={full} viewBox="0 0 66 66"><path d="M32 8h34M32 16h34M0 30h66M0 38h66M0 46h66M0 54h66" stroke="#fbe0bc" strokeWidth="1.500" /><text x="16" y="42" fontSize="50" fontWeight="700" fontFamily="Liberation Serif" fill="#eba23c" textAnchor="middle">“</text><path d="M46 4l7 3-18 38-8-3z" fill="#ef9a2e" /><path d="M27 42l8 3-6 8-9 7z" fill="#3a3a3d" /><path d="M20 60l5-8" stroke="#c0c0c4" strokeWidth="2" /></svg></Tile> },
  { badge: 5, icon: <Tile className="bg-gradient-to-b from-[#4cb2f6] to-[#2a5ce0]"><svg className={full} viewBox="0 0 66 66" fill="none" stroke="#f3f8fe" strokeWidth="5" strokeLinecap="round"><path d="M29 15L46 45M37 15L20 42M13 41h24M48 41h6M17 49l-1 2M49 49l1 2" /></svg></Tile> },
  { badge: 2, icon: <Tile className="bg-gradient-to-b from-[#c3ccd2] to-[#8c8f8e]"><svg className={full} viewBox="0 0 66 66" fill="none"><circle cx="33" cy="33" r="25.500" fill="#7a7d80" stroke="#3a3d40" strokeWidth="4.500" strokeDasharray="2 1.200" /><circle cx="33" cy="33" r="18.500" fill="#8e9194" stroke="#2c2e31" strokeWidth="4" /><path d="M33 33L25 17M33 33h18M33 33L25 49" stroke="#2c2e31" strokeWidth="3" /><circle cx="33" cy="33" r="5" fill="#8e9194" stroke="#2c2e31" strokeWidth="2.500" /></svg></Tile> },
  { icon: <Tile className="bg-white"><svg className={full} viewBox="0 0 66 66"><path d="M0 8h66M0 16h66M0 24h66M0 32h66M0 40h66M0 48h66M0 56h66M8 0v66M16 0v66M24 0v66M32 0v66M40 0v66M48 0v66M56 0v66" stroke="#d2ecd2" strokeWidth="1" /><path d="M12 35h9.500v22H12z" fill="#cf3a36" /><path d="M23 22h9.500v35H23z" fill="#f09a34" /><path d="M34 9h9.500v48H34z" fill="#5cd04a" /><path d="M45 16h9.500v41H45z" fill="#3a7ae8" /></svg></Tile> },
  { icon: <div className="h-[69px] w-[69px] overflow-hidden rounded-[6px] rounded-tl-[16px] rounded-br-[16px] bg-gradient-to-b from-[#4fc8d4] via-[#2a62e0] to-[#2c2ad8]"><svg className={full} viewBox="0 0 69 69" fill="#fff"><path d="M12 24l17-9v29l-17 10zM40 24l17-9v29l-17 10z" /></svg></div> },
  { on: true, icon: <Tile className="bg-white"><svg className={full} viewBox="0 0 66 66" strokeWidth="9" strokeLinecap="round" fill="none"><path d="M14.500 26.500H28" stroke="#55c0ec" /><path d="M32 14.500v4.500h-4.500a4.500 4.500 0 1 1 4.500-4.500z" fill="#55c0ec" stroke="none" /><path d="M39.500 14.500v12" stroke="#52b388" /><path d="M47 31v-4.500a4.500 4.500 0 1 1 4.500 4.500z" fill="#52b388" stroke="none" /><path d="M39.500 39h12" stroke="#e6b544" /><path d="M35 47h4.500a4.500 4.500 0 1 1-4.500 4.500z" fill="#e6b544" stroke="none" /><path d="M27 39v12" stroke="#d4355f" /><path d="M19 34.500V39a4.500 4.500 0 1 1-4.500-4.500z" fill="#d4355f" stroke="none" /></svg></Tile> },
  { on: true, icon: <svg className="h-[72px] w-[72px]" viewBox="0 0 72 72"><path d="M52 1L5 47l-5-4v-5l4-4L52 20z" fill="#2b6fb2" /><path d="M52 71L5 25l-5 4v5l4 4 48 14z" fill="#2f80c8" /><path d="M52 0l20 8v56l-20 8z" fill="#4a9ee8" /><path d="M52 20v32L32 36z" fill="#9b9798" /></svg> },
  { on: true, icon: <div className="h-[66px] w-[66px] rounded-[15px] border-2 border-[#bcd0dc] bg-black p-[4px] shadow-[0_2px_3px_rgba(0,0,0,0.5)]"><div className="h-full rounded-[9px] bg-[#232324] pl-[4px] pt-[2px] font-['Liberation_Mono'] text-[18px] font-bold leading-[20px] text-white">&gt;_</div></div> },
  { icon: <div className="flex h-[72px] w-[72px] items-center justify-center rounded-full bg-[#46a4f4] text-white"><FaDocker className="h-[44px] w-[50px]" /></div> },
];

const running: DockItem[] = [
  { on: true, icon: <div className="relative"><Tile className="bg-white" /><svg className="absolute left-0 top-[-5px] h-[78px] w-[66px]" viewBox="0 0 66 78" fill="none"><path d="M30 12l-5 14C15 36 3 40 5 52q1 6 7 10M35 12l5 14c10 10 22 14 20 26q-1 6-7 10" stroke="#7f868d" strokeWidth="4.500" /><path d="M30 12l-5 14C15 36 3 40 5 52q1 6 7 10M35 12l5 14c10 10 22 14 20 26q-1 6-7 10" stroke="#b4bac0" strokeWidth="2.500" /><circle cx="32.500" cy="6.500" r="5.500" stroke="#555a60" strokeWidth="2" /><path d="M27 15h11l-3 7h-5z" fill="#7f868d" /><path d="M23 22h38" stroke="#85898e" strokeWidth="1.500" /><path d="M49 19v6M60 19v6M24 20v4" stroke="#5a5e64" strokeWidth="2.500" /><path d="M21 46h24l3 16H18z" fill="#2c2e31" /><path d="M24 51h19M23 55h20" stroke="#777b80" strokeWidth="1.200" /><path d="M22.500 62v10M27.500 62v12M32.500 62v13M37.500 62v12M42.500 62v10" stroke="#85898e" strokeWidth="2.500" /></svg></div> },
  { on: true, icon: <Tile className="bg-[#e0434a]"><svg className={full} viewBox="0 0 66 66" fill="none" strokeWidth="6" strokeLinecap="round"><path d="M40 19l8 8c7 8 2 17.500-7 17.500-4 0-6-1-8-3l-8-8" stroke="#f3b0b2" /><path d="M27 48l-7-7.500C13 33 17 23 26 23c4 0 6 1 8 3l8 8" stroke="#fff" /></svg></Tile> },
  { on: true, icon: <div className="h-[69px] w-[69px] overflow-hidden rounded-[12px] bg-[#55bd3a]"><svg className={full} viewBox="0 0 69 69"><path d="M35 11c14 0 25 9 25 20.500 0 6-4 11-8 15-6 6-12 9-18 12 0-4 1-7-2-7C20 51 10 43 10 31.500 10 20 21 11 35 11z" fill="#fff" /><text x="35" y="37" fontSize="14" fontWeight="800" fontFamily="Inter" fill="#55bd3a" textAnchor="middle">LINE</text></svg></div> },
  { on: true, icon: <Tile className="bg-gradient-to-b from-white to-[#dcdcde]"><svg className={full} viewBox="0 0 66 66"><circle cx="33" cy="33" r="28.500" fill="#2b84e0" /><circle cx="33" cy="33" r="26" fill="none" stroke="#9cc8f2" strokeWidth="3" strokeDasharray=".8 1.900" /><path d="M53 16L36 37l-6-7z" fill="#e0443a" /><path d="M13 50l17-20 6 7z" fill="#f1f1f3" /></svg></Tile> },
  { on: true, icon: <div className="h-[72px] w-[72px] overflow-hidden rounded-[26px] bg-gradient-to-b from-[#5590f6] to-[#3d6ef0]"><svg className={full} viewBox="0 0 72 72" fill="#fff"><path d="M14 28q0-4 4-4h20q8 0 8 8v13q0 4-4 4H22q-8 0-8-8zM48 33l9-7q1.500-1 1.500 1v19q0 2-1.500 1l-9-7z" /></svg></div> },
];

function Cell({ item }: { item: DockItem }) {
  return (
    <div className="relative flex h-full w-[85.650px] shrink-0 items-center justify-center pb-[7px]">
      {item.icon}
      {item.badge && <span className="absolute right-[3px] top-[7px] flex h-[31px] w-[31px] items-center justify-center rounded-full bg-[#e04b41] text-[20px] leading-none text-white shadow">{item.badge}</span>}
      {item.on && <span className="absolute bottom-[4px] h-2 w-2 rounded-full bg-[#2e2c30]" />}
    </div>
  );
}

function Dock() {
  return (
    <div className="absolute left-[68px] top-[1686px] flex h-[105px] w-[2744px] items-center rounded-[32px] border-2 border-[#b3b0b3] bg-[linear-gradient(180deg,rgba(0,0,0,0.08)_0%,rgba(255,255,255,0.12)_100%),linear-gradient(90deg,#9a9799_0%,#959296_4%,#949195_66%,#bdb6b6_69%,#dcd3cb_71%,#e5dbd0_74%,#e6dee2_80%,#e3dbe1_88%,#e9e0e5_100%)] pl-[3px] shadow-[0_0_3px_rgba(0,0,0,0.4)]">
      {apps.map((a, i) => <Cell key={i} item={a} />)}
      <span className="ml-[21px] h-[76px] w-[2px] shrink-0 bg-[#a8a2a8]" />
      <div className="ml-[17px] flex h-full [&>div>span:last-child]:bg-[#5f585f]">{running.map((a, i) => <Cell key={i} item={a} />)}</div>
      <span className="ml-[18px] h-[76px] w-[2px] shrink-0 bg-[#a8a2a8]" />
      <div className="relative ml-[22px] mt-[4px] h-[54px] w-[77px] shrink-0 bg-[#fafafc] shadow">
        <div className="h-[6px] bg-[#57307c]" />
        <div className="ml-[2px] mt-[2px] h-[3px] w-[8px] bg-[#6a98ee]" />
        <div className="mx-auto mt-[12px] h-[2px] w-[34px] bg-[#9a9a9e]" />
        <div className="mx-auto mt-[3px] h-[1px] w-[42px] bg-[#9ab0e0]" />
        <div className="mx-auto mt-[4px] h-[3px] w-[12px] bg-[#2d62d8]" />
        <div className="mx-auto mt-[7px] h-[3px] w-[12px] bg-[#2d62d8]" />
        <div className="absolute bottom-[-10px] right-0 flex h-[24px] w-[24px] items-center justify-center rounded-[6px] bg-white"><ChromeLogo className="h-[22px] w-[22px]" /></div>
      </div>
      <svg className="ml-[16px] mt-[-6px] h-[76px] w-[60px]" viewBox="0 0 60 76">
        <defs><linearGradient id="bin" x1="0" x2="1"><stop offset="0" stopColor="#c9c9c9" /><stop offset=".4" stopColor="#eceae8" /><stop offset="1" stopColor="#cfcfcf" /></linearGradient></defs>
        <path d="M2 16L10 4l8 3 8-7 8 5 10-4 6 7 8 8z" fill="#f2f2f2" /><path d="M10 12l8-6 6 8zM30 8l8-4 5 10zM44 6l6 8h-9z" fill="#4a5058" /><path d="M20 8l6 2-4 4z" fill="#4ab4d8" /><path d="M34 12l6-3v6z" fill="#d8743a" />
        <path d="M1 16h58l-6 54q-1 6-8 6H15q-7 0-8-6z" fill="url(#bin)" stroke="#aeadad" strokeWidth="1" /><path d="M14 20l5 52M30 20v52M45 20l-4 52" stroke="#fff" strokeWidth="4" opacity=".35" />
      </svg>
    </div>
  );
}

export default function App() {
  return (
    <div className="relative h-[1800px] w-[2880px] overflow-hidden bg-[#1f3f60] font-['Inter','Noto_Sans_CJK_JP',sans-serif]">
      <div className="absolute inset-0 flex">
        <div className="w-[582px] bg-[linear-gradient(180deg,#d0486c_3%,#e5665a_6%,#ec6c5e_16%,#ea5a5c_18.500%,#e9365a_23%,#e23460_31%,#c0386c_38%,#8f4078_45%,#743f78_56%,#5c3e76_69%,#46406f_83%,#2a3e68_89%,#204268_94%,#1f3f60_100%)]" />
        <div className="flex-1 bg-[linear-gradient(180deg,#4590c8_0%,#3c7cb8_10%,#7a3f6a_92%,#9a4070_95%,#4c4a80_100%)]" />
      </div>
      <SafariWindow />
      <ZoomWindow />
      <ChromeWindow />
      <ForceQuitDialog />
      <Dock />
      <MenuBar />
    </div>
  );
}
